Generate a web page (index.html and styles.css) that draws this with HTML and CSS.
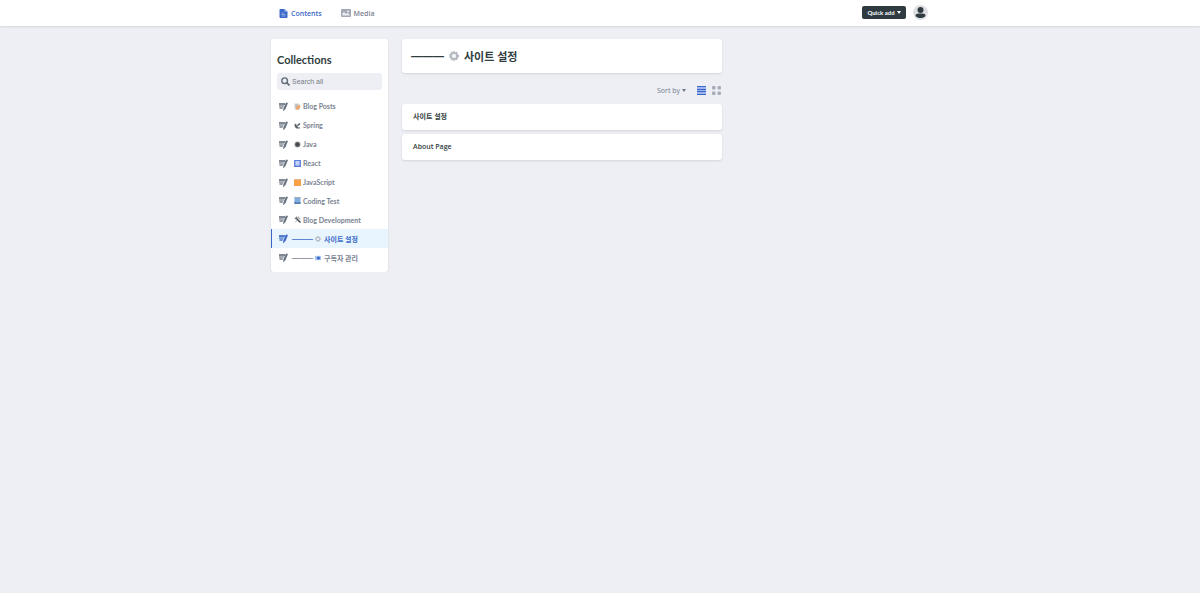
FILE: index.html
```html
<!DOCTYPE html>
<html lang="ko">
<head>
    <meta charset="UTF-8">
    <meta name="viewport" content="width=device-width, initial-scale=1.0">
    <title>Contents</title>
    <link rel="stylesheet" href="styles.css">
</head>
<body>
    <!-- shared icons -->
    <svg class="defs" width="0" height="0" aria-hidden="true">
        <symbol id="write" viewBox="0 0 18 18">
            <path d="M0 2h12v4H0z" opacity=".85"/>
            <path d="M0 6h10l-1 4H0z" opacity=".6"/>
            <path d="M1 10h7l-1 4H1z" opacity=".7"/>
            <path d="M14 1l4 1-5 12-4 4-1-1 1-5z"/>
        </symbol>
        <symbol id="gear" viewBox="0 0 24 24">
            <circle cx="12" cy="12" r="9.500" fill="none" stroke="#a9aeb8" stroke-width="4" stroke-dasharray="4 2"/>
            <circle cx="12" cy="12" r="7" fill="none" stroke="#b4b8c1" stroke-width="4"/>
            <circle cx="12" cy="12" r="4" fill="#f1f2f5"/>
        </symbol>
    </svg>

    <header class="topbar">
        <div class="container topbar-inner">
            <nav class="tabs">
                <a class="tab active" href="#contents">
                    <svg class="tab-icon doc" viewBox="0 0 16 18"><path d="M2 0h8l6 5v11a2 2 0 0 1-2 2H2a2 2 0 0 1-2-2V2a2 2 0 0 1 2-2z" fill="#3a69c7"/><path d="M10 0v5h6z" fill="#a9c0ee"/><path d="M4 8h5M4 11h8M4 14h8" stroke="#dce6fa" stroke-width="1"/></svg>
                    Contents
                </a>
                <a class="tab" href="#media">
                    <svg class="tab-icon" viewBox="0 0 20 16"><rect width="20" height="16" rx="2" fill="#a4a9b5"/><path d="M3 13V9l3-3 4 4 3-2 4 3v2z" fill="#eceef2"/><circle cx="14" cy="5" r="2" fill="#eceef2"/></svg>
                    Media
                </a>
            </nav>
            <div class="actions">
                <button class="quick-add" type="button">Quick add <span class="caret"></span></button>
                <button class="avatar" type="button" aria-label="Account">
                    <svg viewBox="0 0 30 30"><circle cx="15" cy="15" r="15" fill="#dfdfe3"/><circle cx="15" cy="10" r="6" fill="#2f3b41"/><path d="M5 22c0-5 5-5 10-5s10 0 10 5c-3 3-6 4-10 4s-7-1-10-4z" fill="#2f3b41"/></svg>
                </button>
            </div>
        </div>
    </header>

    <div class="container layout">
        <aside class="sidebar">
            <h2>Collections</h2>
            <label class="search">
                <svg viewBox="0 0 16 16"><circle cx="6.500" cy="6.500" r="5" fill="none" stroke="#5f6b75" stroke-width="2.500"/><path d="M10 10l5 5" stroke="#5f6b75" stroke-width="3"/></svg>
                <input type="text" placeholder="Search all" aria-label="Search all">
            </label>
            <nav class="collections">
                <a href="#blog"><svg class="write"><use href="#write"/></svg><svg class="emoji" viewBox="0 0 14 14"><path d="M1 1h8l3 3v9H1z" fill="#d5d2d0"/><path d="M3 4h4M3 7h4" stroke="#8b8784"/><path d="M4 10l6-6 3 3-4 6H4z" fill="#f1a45f"/></svg>Blog Posts</a>
                <a href="#spring"><svg class="write"><use href="#write"/></svg><svg class="emoji" viewBox="0 0 14 14"><path d="M1 4c3-1 4 1 5 4 1-4 4-6 7-6-1 4-3 6-6 6 0 2 2 3 5 3v2H5C2 11 1 8 1 4z" fill="#5b656b"/></svg>Spring</a>
                <a href="#java"><svg class="write"><use href="#write"/></svg><svg class="emoji" viewBox="0 0 14 14"><circle cx="7" cy="7" r="6" fill="#a5a5a5"/><circle cx="7" cy="7" r="4.500" fill="#484b4e"/></svg>Java</a>
                <a href="#react"><svg class="write"><use href="#write"/></svg><svg class="emoji" viewBox="0 0 14 14"><rect width="14" height="14" rx="1" fill="#5b7fdb"/><rect x="3" y="2" width="8" height="9" fill="#c4d2f7"/><path d="M1 4h2M1 9h2M11 4h2M11 9h2" stroke="#c4d2f7"/></svg>React</a>
                <a href="#javascript"><svg class="write"><use href="#write"/></svg><svg class="emoji" viewBox="0 0 14 14"><rect width="14" height="14" rx="1" fill="#fba046"/><path d="M0 1h14" stroke="#dfb78d" stroke-width="2"/></svg>JavaScript</a>
                <a href="#coding"><svg class="write"><use href="#write"/></svg><svg class="emoji" viewBox="0 0 14 14"><rect x="1" width="12" height="14" rx="1" fill="#7faee5"/><path d="M1 1h12" stroke="#a5a9af" stroke-width="2"/><path d="M1 9l5 2 7-1v4H1z" fill="#557ba5"/></svg>Coding Test</a>
                <a href="#dev"><svg class="write"><use href="#write"/></svg><svg class="emoji" viewBox="0 0 14 14"><path d="M2 13l7-8" stroke="#b5b8bb" stroke-width="2"/><path d="M4 4l9 9" stroke="#484d52" stroke-width="3"/><path d="M1 5l4-4 3 1-5 5z" fill="#7b7f83"/><path d="M9 1l1 4 3 1" fill="none" stroke="#9b9ea2" stroke-width="2"/></svg>Blog Development</a>
                <a class="active" href="#settings"><svg class="write"><use href="#write"/></svg><span class="dash">———</span><svg class="emoji small"><use href="#gear"/></svg>사이트 설정</a>
                <a href="#subscribers"><svg class="write"><use href="#write"/></svg><span class="dash">———</span><svg class="emoji small" viewBox="0 0 14 14"><rect y="2" width="14" height="10" fill="#a9c4ee"/><circle cx="8" cy="7" r="3.500" fill="#3568c4"/></svg>구독자 관리</a>
            </nav>
        </aside>

        <main class="content">
            <h1 class="card title"><span class="dash">———</span><svg><use href="#gear"/></svg>사이트 설정</h1>
            <div class="controls">
                <button class="sort" type="button">Sort by <span class="caret"></span></button>
                <button class="view" type="button" aria-label="List view">
                    <svg viewBox="0 0 18 18"><rect y="2" width="18" height="14" fill="#9db5ec"/><path d="M0 1h18M0 7h18M0 11h18M0 17h18" stroke="#3a69c7" stroke-width="2"/></svg>
                </button>
                <button class="view" type="button" aria-label="Grid view">
                    <svg viewBox="0 0 18 18" fill="#a9adb8"><rect width="7" height="7" rx="2"/><rect x="11" width="7" height="7" rx="2"/><rect y="11" width="7" height="7" rx="2"/><rect x="11" y="11" width="7" height="7" rx="2"/></svg>
                </button>
            </div>
            <div class="entries">
                <a class="card entry" href="#site">사이트 설정</a>
                <a class="card entry" href="#about">About Page</a>
            </div>
        </main>
    </div>
</body>
</html>
```
FILE: styles.css
```css
* {
    box-sizing: border-box;
}
body {
    margin: 0;
    background-color: #eeeff4;
    color: #313d3e;
    font-family: "Open Sans", "Noto Sans CJK KR", sans-serif;
    font-size: 7px;
    font-weight: 600;
}
a {
    color: inherit;
    text-decoration: none;
}
button {
    padding: 0;
    border: 0;
    background: none;
    color: inherit;
    font: inherit;
    cursor: pointer;
}
svg {
    display: block;
    flex: none;
}
.defs {
    position: absolute;
}
.container {
    width: 100%;
    max-width: 658px;
    margin: 0 auto;
}
.card,
.sidebar {
    background-color: #fff;
    border-radius: 3px;
    box-shadow: 0 1px 2px rgba(68, 74, 87, 0.15);
}
.caret {
    border: 2px solid transparent;
    border-top: 3px solid currentColor;
    border-bottom: 0;
}
.dash {
    font-family: "Liberation Sans", Arial, sans-serif;
    font-weight: 700;
}

/* top bar */
.topbar {
    background-color: #fff;
    box-shadow: 0 1px 2px rgba(68, 74, 87, 0.15);
}
.topbar-inner {
    display: flex;
    justify-content: space-between;
    height: 26px;
    padding: 0 1px 0 8px;
}
.tabs,
.tab,
.actions {
    display: flex;
    align-items: center;
}
.tabs {
    gap: 19px;
}
.tab {
    gap: 3px;
    color: #7b8290;
}
.tab.active {
    color: #3a69c7;
}
.tab-icon {
    width: 10px;
    height: 8px;
}
.tab-icon.doc {
    width: 9px;
    height: 9px;
}
.actions {
    gap: 7px;
    padding-bottom: 2px;
}
.quick-add {
    display: flex;
    align-items: center;
    justify-content: center;
    gap: 2px;
    width: 44px;
    height: 13px;
    border-radius: 2px;
    background-color: #2f3b41;
    color: #fff;
    font-family: Lato, sans-serif;
    font-size: 6px;
    font-weight: 700;
}
.avatar svg {
    width: 15px;
    height: 15px;
}

/* columns */
.layout {
    display: flex;
    align-items: flex-start;
    gap: 14px;
    padding-top: 13px;
}
.sidebar {
    flex: none;
    width: 117px;
    padding: 12px 0 5px;
}
.sidebar h2 {
    margin: 0 6px 5px;
    font-family: Lato, sans-serif;
    font-size: 11px;
    line-height: 17px;
    font-weight: 700;
}
.search {
    display: flex;
    align-items: center;
    gap: 2px;
    height: 17px;
    margin: 0 6px 7px;
    padding: 0 4px;
    border-radius: 3px;
    background-color: #eeeff4;
}
.search svg {
    width: 9px;
    height: 9px;
}
.search input {
    flex: 1;
    min-width: 0;
    padding: 0;
    border: 0;
    outline: 0;
    background: none;
    font: 7px "Liberation Sans", Arial, sans-serif;
}
.search input::placeholder {
    color: #757b86;
}
.collections {
    display: flex;
    flex-direction: column;
    height: 170px;
    font-family: Lato, "Noto Sans CJK KR", sans-serif;
    font-weight: 700;
}
.collections a {
    display: flex;
    flex: 1;
    align-items: center;
    gap: 2px;
    padding-left: 7px;
    border-left: 1px solid transparent;
    color: #798291;
    fill: #687381;
}
.collections a.active {
    border-color: #3a69c7;
    background-color: #e8f5fe;
    color: #3a69c7;
    fill: #3a69c7;
}
.write {
    width: 9px;
    height: 9px;
    margin-right: 4px;
}
.emoji {
    width: 7px;
    height: 7px;
}
.emoji.small {
    width: 6px;
    height: 6px;
    margin-right: 1px;
}
.collections .dash {
    margin-left: -2px;
}
.content {
    flex: 0 1 320px;
}
.title {
    display: flex;
    align-items: center;
    gap: 5px;
    height: 34px;
    margin: 0;
    padding: 0 9px;
    font-size: 11px;
    font-weight: 700;
}
.title svg {
    width: 10px;
    height: 10px;
}
.controls {
    display: flex;
    align-items: center;
    justify-content: flex-end;
    gap: 6px;
    height: 31px;
    padding: 3px 1px 0 0;
}
.sort {
    display: flex;
    align-items: center;
    gap: 2px;
    margin-right: 5px;
    color: #6f7888;
    font-weight: 500;
}
.view svg {
    width: 9px;
    height: 9px;
}
.entries {
    display: flex;
    flex-direction: column;
    gap: 4px;
}
.entry {
    padding: 8px 11px;
    line-height: 10px;
}
```
